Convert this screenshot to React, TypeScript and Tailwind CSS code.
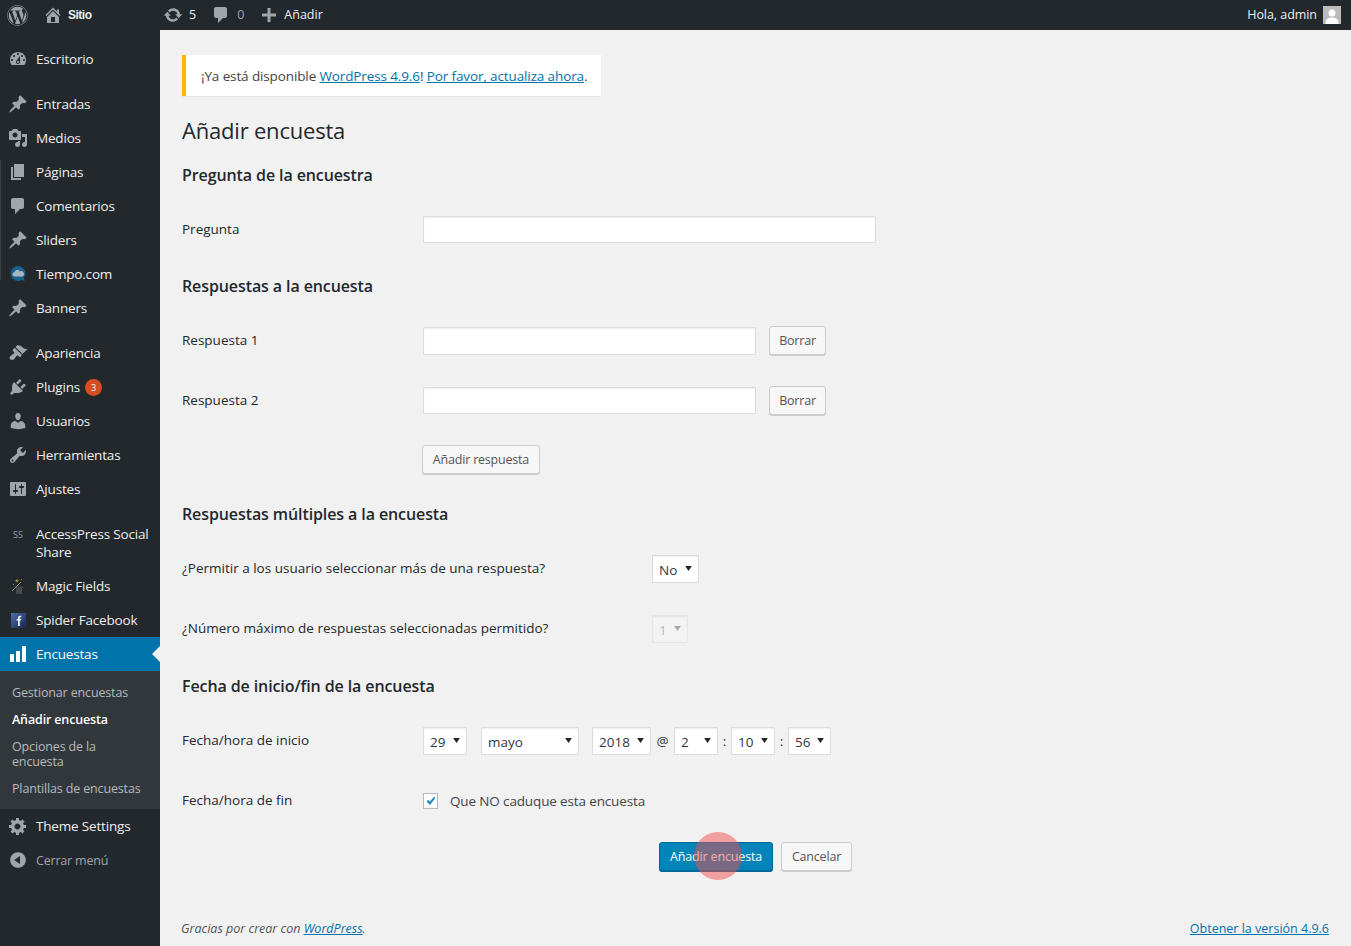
import React from "react";
import { FaWordpress } from "react-icons/fa";

const P: Record<string, string> = {
  home: "M16 8.5l1.53 1.53-1.06 1.06L10 4.62l-6.47 6.47-1.06-1.06L10 2.5l4 4v-2h2v4zm-6-2.46l6 5.99V18H4v-5.97zM12 17v-5H8v5h4z",
  dashboard: "M3.76 16h12.48c1.1-1.37 1.76-3.11 1.76-5 0-4.42-3.58-8-8-8s-8 3.58-8 8c0 1.89.66 3.63 1.76 5zM10 4c.55 0 1 .45 1 1s-.45 1-1 1-1-.45-1-1 .45-1 1-1zM6 6c.55 0 1 .45 1 1s-.45 1-1 1-1-.45-1-1 .45-1 1-1zm8 0c.55 0 1 .45 1 1s-.45 1-1 1-1-.45-1-1 .45-1 1-1zm-5.37 5.55L12 7v6c0 1.1-.9 2-2 2s-2-.9-2-2c0-.57.24-1.08.63-1.45zM4 10c.55 0 1 .45 1 1s-.45 1-1 1-1-.45-1-1 .45-1 1-1zm12 0c.55 0 1 .45 1 1s-.45 1-1 1-1-.45-1-1 .45-1 1-1zm-5 3c0-.55-.45-1-1-1s-1 .45-1 1 .45 1 1 1 1-.45 1-1z",
  pin: "M10.44 3.02l1.82-1.82 6.36 6.35-1.83 1.82c-1.05-.68-2.48-.57-3.41.36l-.75.75c-.92.93-1.04 2.35-.35 3.41l-1.83 1.82-2.41-2.41-2.8 2.79c-.42.42-3.38 2.71-3.8 2.29s1.86-3.39 2.28-3.81l2.79-2.79L4.1 9.36l1.83-1.82c1.05.69 2.48.57 3.4-.36l.75-.75c.93-.92 1.05-2.35.36-3.41z",
  media: "M13 11V4c0-.55-.45-1-1-1h-1.67L9 1H5L3.67 3H2c-.55 0-1 .45-1 1v7c0 .55.45 1 1 1h10c.55 0 1-.45 1-1zM7 4.5c1.38 0 2.5 1.12 2.5 2.5S8.38 9.5 7 9.5 4.5 8.38 4.5 7 5.62 4.5 7 4.5zM14 6h5v10.5c0 1.38-1.12 2.5-2.5 2.5S14 17.88 14 16.5s1.12-2.5 2.5-2.5c.17 0 .34.02.5.05V9h-3V6zm-4 8.05V13h2v3.5c0 1.38-1.12 2.5-2.5 2.5S7 17.88 7 16.5 8.12 14 9.5 14c.17 0 .34.02.5.05z",
  page: "M6 15V2h10v13H6zm-1 1h8v2H3V5h2v11z",
  comment: "M5 2h9c1.1 0 2 .9 2 2v7c0 1.1-.9 2-2 2h-2l-5 5v-5H5c-1.1 0-2-.9-2-2V4c0-1.1.9-2 2-2z",
  appearance: "M14.48 11.06L7.41 3.99l1.5-1.5c.5-.56 2.3-.47 3.51.32 1.21.8 1.43 1.28 2.91 2.1 1.18.64 2.45 1.26 4.45.85zm-.71.71L6.7 4.7 4.93 6.47c-.39.39-.39 1.02 0 1.41l1.06 1.06c.39.39.39 1.03 0 1.42-.6.6-1.43 1.11-2.21 1.69-.35.26-.7.53-1.01.84C1.43 13.23 1 15.11 2.16 16.27s3.05.73 4.09-.31c.31-.31.58-.66.84-1.01.58-.78 1.09-1.61 1.69-2.21.39-.39 1.03-.39 1.42 0l1.06 1.06c.39.39 1.02.39 1.41 0z",
  plugin: "M13.11 4.36L9.87 7.6 8 5.73l3.24-3.24c.35-.34 1.05-.2 1.56.32.52.51.66 1.21.31 1.55zm-8 1.77l.91-1.12 9.01 9.01-1.19.84c-.71.71-2.63 1.16-3.82 1.16H6.14L4.9 17.26c-.59.59-1.54.59-2.12 0-.59-.58-.59-1.53 0-2.12l1.24-1.24v-3.88c0-1.13.4-3.19 1.09-3.89zm7.26 3.97l3.24-3.24c.34-.35 1.04-.21 1.55.31.52.51.66 1.21.31 1.55l-3.24 3.25z",
  users: "M10 9.25c-2.27 0-2.73-3.44-2.73-3.44C7 4.02 7.82 2 9.97 2c2.16 0 2.98 2.02 2.71 3.81 0 0-.41 3.44-2.68 3.44zm0 2.57L12.72 10c2.39 0 4.52 2.33 4.52 4.53v2.49s-3.65 1.13-7.24 1.13c-3.65 0-7.24-1.13-7.24-1.13v-2.49c0-2.25 1.94-4.48 4.47-4.48z",
  tools: "M16.68 9.77c-1.34 1.34-3.3 1.67-4.95.99l-5.41 6.52c-.99.99-2.59.99-3.58 0s-.99-2.59 0-3.57l6.52-5.42c-.68-1.65-.35-3.61.99-4.95 1.28-1.28 3.12-1.62 4.72-1.06l-2.89 2.89 2.82 2.82 2.86-2.87c.53 1.58.18 3.39-1.08 4.65zM3.81 16.21c.4.39 1.04.39 1.43 0 .4-.4.4-1.04 0-1.43-.39-.4-1.03-.4-1.43 0-.39.39-.39 1.03 0 1.43z",
  settings: "M18 16V4c0-.55-.45-1-1-1H3c-.55 0-1 .45-1 1v12c0 .55.45 1 1 1h14c.55 0 1-.45 1-1zM8 11h1c.55 0 1 .45 1 1s-.45 1-1 1H8v1.5c0 .28-.22.5-.5.5s-.5-.22-.5-.5V13H6c-.55 0-1-.45-1-1s.45-1 1-1h1V5.5c0-.28.22-.5.5-.5s.5.22.5.5V11zm5-2h-1c-.55 0-1-.45-1-1s.45-1 1-1h1V5.5c0-.28.22-.5.5-.5s.5.22.5.5V7h1c.55 0 1 .45 1 1s-.45 1-1 1h-1v5.5c0 .28-.22.5-.5.5s-.5-.22-.5-.5V9z",
  chart: "M18 18V2h-4v16h4zm-6 0V7H8v11h4zm-6 0v-8H2v8h4z",
  gear: "M18 12h-2.18c-.17.7-.44 1.35-.81 1.93l1.54 1.54-2.1 2.1-1.54-1.54c-.58.36-1.23.63-1.91.79V19H8v-2.18c-.68-.16-1.33-.43-1.91-.79l-1.54 1.54-2.12-2.12 1.54-1.54c-.36-.58-.63-1.23-.79-1.91H1V9.03h2.17c.16-.7.44-1.35.8-1.94L2.43 5.55l2.1-2.1 1.54 1.54c.58-.37 1.24-.64 1.93-.81V2h3v2.18c.68.16 1.33.43 1.91.79l1.54-1.54 2.12 2.12-1.54 1.54c.36.59.64 1.24.8 1.94H18V12zm-8.5 1.5c1.66 0 3-1.34 3-3s-1.34-3-3-3-3 1.34-3 3 1.34 3 3 3z",
  collapse: "M10 2.16c4.33 0 7.84 3.51 7.84 7.84s-3.51 7.84-7.84 7.84S2.16 14.33 2.16 10 5.71 2.16 10 2.16zm2 11.72V6.12L6.18 9.97z",
  update: "M10.2 3.28c3.53 0 6.43 2.61 6.92 6h2.08l-3.5 4-3.5-4h2.32c-.45-1.97-2.21-3.44-4.32-3.44-1.45 0-2.73.71-3.54 1.78L4.95 5.66C6.23 4.2 8.11 3.28 10.2 3.28zm-.4 13.44c-3.52 0-6.43-2.61-6.92-6H.8l3.5-4c1.17 1.33 2.33 2.67 3.5 4H5.48c.45 1.97 2.21 3.44 4.32 3.44 1.45 0 2.73-.71 3.54-1.78l1.71 1.95c-1.28 1.46-3.15 2.39-5.25 2.39z",
  plus: "M17 8.5v3h-5.5V17h-3v-5.500H3v-3h5.500V3h3v5.500H17z",
};

function Dash({ n, className = "", size = 20 }: { n: string; className?: string; size?: number }) {
  return (
    <svg viewBox="0 0 20 20" width={size} height={size} fill="currentColor" className={"shrink-0 " + className}>
      <path d={P[n]} />
    </svg>
  );
}

function Tiempo() {
  return (
    <svg viewBox="0 0 20 20" width={20} height={20} className="shrink-0">
      <circle cx="10" cy="9.500" r="7.500" fill="#17618c" />
      <path d="M13 15l3.500 2.500-.5-4.500z" fill="#17618c" />
      <path d="M6 12.500a2.200 2.200 0 0 1 .4-4.300 3 3 0 0 1 5.600-.7 2.600 2.600 0 0 1 2.400 5z" fill="#a9b6bf" />
    </svg>
  );
}
function Wand() {
  return (
    <svg viewBox="0 0 20 20" width={20} height={20} className="shrink-0">
      <path d="M7 10.500h8v1.500h-1v6H8v-6H7z" fill="#45484a" />
      <path d="M4 15l9-9" stroke="#8f8f80" strokeWidth="1" />
      <path d="M9 2.500l.6 1.700 1.700.6-1.700.6L9 7.100l-.6-1.700-1.700-.6 1.700-.6z" fill="#a89a45" />
      <path d="M13 3h1v1h-1zM5 8h1v1H5z" fill="#8f8740" />
    </svg>
  );
}
function Fb() {
  return (
    <svg viewBox="0 0 20 20" width={20} height={20} className="shrink-0">
      <defs>
        <linearGradient id="fb" x1="0" y1="0" x2="1" y2="1">
          <stop offset="0" stopColor="#4f6ea8" />
          <stop offset="1" stopColor="#162650" />
        </linearGradient>
      </defs>
      <rect x="3" y="3" width="15" height="15" fill="url(#fb)" />
      <path d="M10 16v-5.500H8.500V9H10V7.800C10 6.500 10.800 5.800 12 5.800h1.300v1.500h-.8c-.5 0-.7.2-.7.7v1h1.500l-.2 1.500h-1.300V16z" fill="#e8edf6" />
    </svg>
  );
}

type Item = { label: React.ReactNode; icon: React.ReactNode; gap?: boolean };

const ic = (n: string) => <Dash n={n} className="text-[#a0a5aa]" />;

const menu1: Item[] = [
  { label: "Escritorio", icon: ic("dashboard") },
  { label: "Entradas", icon: ic("pin"), gap: true },
  { label: "Medios", icon: ic("media") },
  { label: "Páginas", icon: ic("page") },
  { label: "Comentarios", icon: ic("comment") },
  { label: "Sliders", icon: ic("pin") },
  { label: "Tiempo.com", icon: <Tiempo /> },
  { label: "Banners", icon: ic("pin") },
  { label: "Apariencia", icon: ic("appearance"), gap: true },
  {
    label: (
      <span className="flex items-center gap-[5px]">
        Plugins
        <span className="flex h-[17px] w-[17px] items-center justify-center rounded-full bg-[#d54e21] text-[9px] leading-none tracking-normal text-white">3</span>
      </span>
    ),
    icon: ic("plugin"),
  },
  { label: "Usuarios", icon: ic("users") },
  { label: "Herramientas", icon: ic("tools") },
  { label: "Ajustes", icon: ic("settings") },
];

function MenuRow({ item }: { item: Item }) {
  return (
    <div className={(item.gap ? "mt-[11px] " : "") + "flex h-[34px] items-center pl-[8px] text-[#eeeeee]"}>
      <span className="flex w-[28px] justify-start">{item.icon}</span>
      <span>{item.label}</span>
    </div>
  );
}

function Sidebar() {
  return (
    <aside className="relative w-[160px] shrink-0 bg-[#23282d] pt-[12px] text-[13.5px] tracking-[-0.18px]">
      <span className="absolute left-0 top-[130px] h-[120px] w-[1px] bg-[#3b4045]" />
      {menu1.map((m, i) => (
        <MenuRow key={i} item={m} />
      ))}
      <div className="mt-[11px] flex py-[8px] pl-[8px] leading-[18px] text-[#eeeeee]">
        <span className="flex w-[28px] pl-[5px] pt-[1px] text-[9px] tracking-normal text-[#8fa3ad]">SS</span>
        <span className="w-[120px]">AccessPress Social Share</span>
      </div>
      <MenuRow item={{ label: "Magic Fields", icon: <Wand /> }} />
      <MenuRow item={{ label: "Spider Facebook", icon: <Fb /> }} />
      <div className="relative flex h-[34px] items-center bg-[#0073aa] pl-[8px] text-white">
        <span className="flex w-[28px]"><Dash n="chart" className="text-white" /></span>
        <span>Encuestas</span>
        <span className="absolute right-0 top-[9px] h-0 w-0 border-y-[8px] border-r-[8px] border-y-transparent border-r-[#f1f1f1]" />
      </div>
      <div className="bg-[#32373c] pb-[7px] pt-[8px] text-[12.5px] leading-[15px] tracking-[-0.15px] text-[#b4b9be]">
        <div className="px-[12px] py-[6px]">Gestionar encuestas</div>
        <div className="px-[12px] py-[6px] font-semibold text-white">Añadir encuesta</div>
        <div className="px-[12px] py-[6px]">Opciones de la encuesta</div>
        <div className="px-[12px] py-[6px]">Plantillas de encuestas</div>
      </div>
      <MenuRow item={{ label: "Theme Settings", icon: ic("gear") }} />
      <div className="flex h-[34px] items-center pl-[8px] text-[12.5px] tracking-[-0.2px] text-[#a0a5aa]">
        <span className="flex w-[28px]"><Dash n="collapse" className="text-[#a0a5aa]" /></span>
        <span className="pt-[2px]">Cerrar menú</span>
      </div>
    </aside>
  );
}

function TopBar() {
  return (
    <header className="flex h-[30px] items-center bg-[#23282d] text-[12.5px] text-[#eeeeee]">
      <FaWordpress className="ml-[7px] h-[21px] w-[21px] text-[#a0a5aa]" />
      <Dash n="home" className="ml-[15px] text-[#a0a5aa]" />
      <span className="ml-[5px] w-[95px] font-['Liberation_Sans'] text-[12px] font-bold tracking-[-0.5px]">Sitio</span>
      <Dash n="update" className="text-[#a0a5aa]" />
      <span className="ml-[6px]">5</span>
      <Dash n="comment" className="ml-[15px] text-[#a0a5aa]" />
      <span className="ml-[6px] text-[#a0a5aa]">0</span>
      <Dash n="plus" className="ml-[15px] text-[#a0a5aa]" />
      <span className="ml-[5px]">Añadir</span>
      <span className="ml-auto tracking-[-0.05px]">Hola, admin</span>
      <span className="ml-[6px] mr-[10px] flex h-[18px] w-[18px] items-end justify-center overflow-hidden bg-[#bcbcbc]">
        <svg viewBox="0 0 18 18" width={18} height={18}>
          <circle cx="9" cy="7" r="3.500" fill="#fff" />
          <path d="M2.500 18c0-4.500 2.500-6.500 6.500-6.500s6.500 2 6.500 6.500z" fill="#fff" />
        </svg>
      </span>
    </header>
  );
}

const inputCls = "rounded-[1px] border border-[#dddddd] bg-white shadow-[inset_0_1px_2px_rgba(0,0,0,0.07)]";
const btnCls = "flex h-[29px] items-center justify-center rounded-[3px] border border-[#cccccc] bg-[#f7f7f7] pt-[2px] text-[12.5px] tracking-[-0.2px] text-[#555555] shadow-[0_1px_0_#cccccc]";

function Sel({ v, w, ml = "", disabled = false }: { v: string; w: string; ml?: string; disabled?: boolean }) {
  return (
    <span
      className={
        "flex h-[28px] items-center justify-between border pl-[6px] pr-[6px] text-[13.5px] shadow-[inset_0_1px_2px_rgba(0,0,0,0.07)] " +
        (disabled ? "border-[#e6e6e6] bg-[#f3f3f3] text-[#b5b5b5] " : "border-[#dddddd] bg-white text-[#32373c] ") +
        w + " " + ml
      }
    >
      <span className="mt-[2px]">{v}</span>
      <svg viewBox="0 0 8 6" width={7} height={5} className="mb-[1px]" fill={disabled ? "#a8a8a8" : "#222222"}>
        <path d="M0 0h8L4 6z" />
      </svg>
    </span>
  );
}

function H2({ children, mt }: { children: React.ReactNode; mt: string }) {
  return <h2 className={"text-[16px] font-semibold leading-[22px] tracking-[-0.1px] text-[#23282d] " + mt}>{children}</h2>;
}

function Row({ label, w = "w-[241px]", mt, up = true, children }: { label: string; w?: string; mt: string; up?: boolean; children: React.ReactNode }) {
  return (
    <div className={"flex items-center text-[13.5px] text-[#23282d] " + mt}>
      <span className={"shrink-0 " + w + (up ? " mb-[2px]" : "")}>{label}</span>
      {children}
    </div>
  );
}

export default function App() {
  return (
    <div className="flex h-[946px] w-[1351px] flex-col overflow-hidden bg-[#f1f1f1] font-['Open_Sans',sans-serif]">
      <TopBar />
      <div className="flex flex-1">
        <Sidebar />
        <main className="relative flex flex-1 flex-col pl-[22px] pr-[22px]">
          <div className="mt-[25px] flex h-[41px] w-[419px] items-center border-l-4 border-[#ffb900] bg-white pl-[15px] pt-[2px] text-[13.5px] tracking-[-0.12px] text-[#444444] shadow-[0_1px_1px_rgba(0,0,0,0.04)]">
            <span>
              ¡Ya está disponible <a className="text-[#0073aa] underline">WordPress 4.9.6</a>! <a className="text-[#0073aa] underline">Por favor, actualiza ahora</a>.
            </span>
          </div>
          <h1 className="mt-[19px] text-[22px] font-normal leading-[30px] tracking-[-0.2px] text-[#23282d]">Añadir encuesta</h1>

          <H2 mt="mt-[19px]">Pregunta de la encuestra</H2>
          <Row label="Pregunta" up={false} mt="mt-[30px]"><span className={inputCls + " h-[27px] w-[453px]"} /></Row>

          <H2 mt="mt-[32px]">Respuestas a la encuesta</H2>
          <Row label="Respuesta 1" up={false} mt="mt-[29px]">
            <span className={inputCls + " h-[28px] w-[333px]"} />
            <span className={btnCls + " ml-[13px] w-[57px]"}>Borrar</span>
          </Row>
          <Row label="Respuesta 2" up={false} mt="mt-[31px]">
            <span className={inputCls + " h-[27px] w-[333px]"} />
            <span className={btnCls + " ml-[13px] w-[57px]"}>Borrar</span>
          </Row>
          <div className="mt-[30px] pl-[240px]">
            <span className={btnCls + " w-[118px]"}>Añadir respuesta</span>
          </div>

          <H2 mt="mt-[29px]">Respuestas múltiples a la encuesta</H2>
          <Row label="¿Permitir a los usuario seleccionar más de una respuesta?" w="w-[470px]" mt="mt-[30px]"><Sel v="No" w="w-[47px]" /></Row>
          <Row label="¿Número máximo de respuestas seleccionadas permitido?" w="w-[470px]" mt="mt-[32px]"><Sel v="1" w="w-[36px]" disabled /></Row>

          <H2 mt="mt-[32px]">Fecha de inicio/fin de la encuesta</H2>
          <Row label="Fecha/hora de inicio" mt="mt-[30px]">
            <Sel v="29" w="w-[44px]" />
            <Sel v="mayo" w="w-[98px]" ml="ml-[14px]" />
            <Sel v="2018" w="w-[59px]" ml="ml-[13px]" />
            <span className="flex w-[23px] justify-center text-[#32373c]">@</span>
            <Sel v="2" w="w-[44px]" />
            <span className="flex w-[13px] justify-center text-[#32373c]">:</span>
            <Sel v="10" w="w-[44px]" />
            <span className="flex w-[13px] justify-center text-[#32373c]">:</span>
            <Sel v="56" w="w-[43px]" />
          </Row>
          <Row label="Fecha/hora de fin" mt="mt-[35px]">
            <span className="flex h-[16px] w-[15px] items-center justify-center border border-[#b4b9be] bg-white">
              <svg viewBox="0 0 16 16" width={14} height={14} className="shrink-0"><path d="M3 8.500l1.800-1.800 2 2L11.500 3l1.500 1.500L6.800 12.500z" fill="#1e8cbe" /></svg>
            </span>
            <span className="ml-[12px] tracking-[-0.14px] text-[#444444]">Que NO caduque esta encuesta</span>
          </Row>

          <div className="relative mt-[30px] flex pl-[477px]">
            <span className="flex h-[29px] w-[114px] items-center justify-center rounded-[3px] border border-[#006799] bg-[#0085ba] pt-[2px] text-[12.5px] tracking-[-0.15px] text-white shadow-[0_1px_0_#006799]">Añadir encuesta</span>
            <span className={btnCls + " ml-[8px] w-[71px]"}>Cancelar</span>
            <span className="absolute left-[512px] top-[-10px] h-[48px] w-[48px] rounded-full bg-[#f05050]/50" />
          </div>

          <div className="absolute bottom-[7px] left-[21px] right-[22px] flex items-center justify-between text-[12.5px] text-[#555555]">
            <span className="italic">Gracias por crear con <a className="text-[#0073aa] underline">WordPress</a>.</span>
            <a className="font-medium text-[#0073aa] underline">Obtener la versión 4.9.6</a>
          </div>
        </main>
      </div>
    </div>
  );
}
